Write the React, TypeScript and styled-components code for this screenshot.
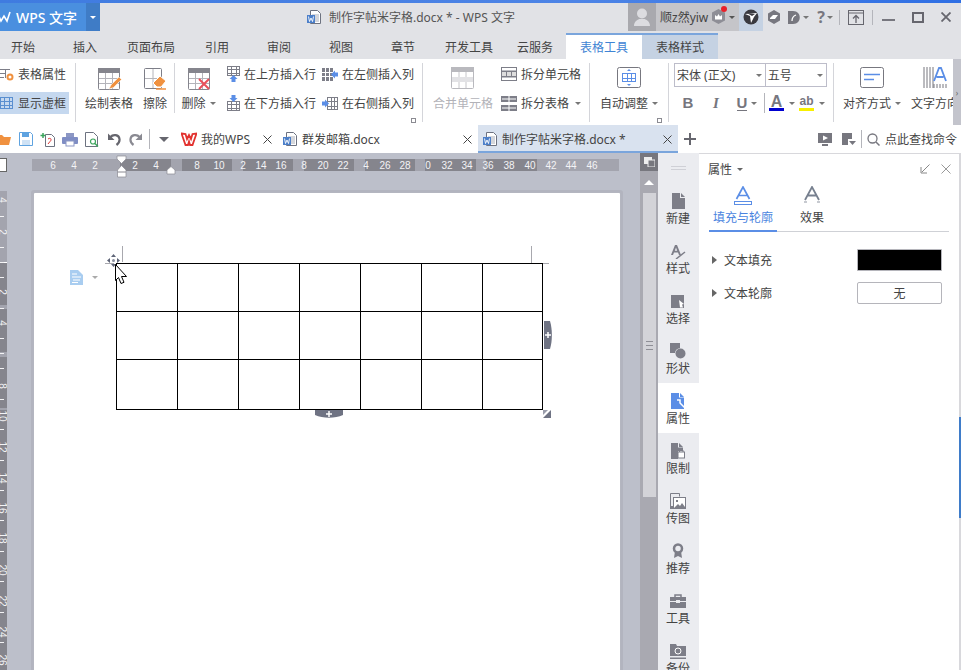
import styled, { createGlobalStyle } from "styled-components";
import type { ReactNode } from "react";

const FONT = `"Noto Sans", "Noto Sans CJK SC", sans-serif`;
const BLUE = "#5b8ee6";
const GREY = "#7d7e88";
const ORANGE = "#f0913f";

const Global = createGlobalStyle`
  html, body { margin: 0; padding: 0; background: #fff; }
  body { font-family: ${FONT}; font-size: 12px; color: #444; }
  * { box-sizing: border-box; }
`;

const Shell = styled.div`
  width: 961px;
  height: 670px;
  overflow: hidden;
  display: flex;
  flex-direction: column;
  background: #e1e2e6;
`;

const TopStrip = styled.div`
  height: 3px;
  flex: none;
  background: linear-gradient(90deg, #3f7be0, #4d84e6 60%, #2f6fe4);
`;

/* title bar */
const TitleBar = styled.div`
  height: 28px;
  flex: none;
  display: flex;
  align-items: stretch;
`;

const WpsButton = styled.div`
  width: 100px;
  display: flex;
  background: #4a8fdf;
  color: #fff;
`;

const WpsName = styled.div`
  flex: 1;
  display: flex;
  align-items: center;
  gap: 5px;
  font-size: 14px;
  font-weight: 500;
  overflow: hidden;
  white-space: nowrap;
`;

const WpsArrow = styled.div`
  width: 14px;
  flex: none;
  display: flex;
  align-items: center;
  justify-content: center;
  background: #3f7cc6;
`;

const Caret = styled.span<{ $color?: string; $size?: number; $up?: boolean; $ml?: number }>`
  display: inline-block;
  flex: none;
  width: 0;
  height: 0;
  margin-left: ${(p) => p.$ml ?? 0}px;
  border-left: ${(p) => p.$size ?? 3}px solid transparent;
  border-right: ${(p) => p.$size ?? 3}px solid transparent;
  border-top: ${(p) => p.$size ?? 3}px solid ${(p) => p.$color ?? "#666"};
  transform: ${(p) => (p.$up ? "rotate(180deg)" : "none")};
`;

const DocTitle = styled.div`
  display: flex;
  align-items: center;
  gap: 7px;
  padding-left: 207px;
  font-size: 12px;
  color: #555;
  white-space: nowrap;
`;

const TitleRight = styled.div`
  margin-left: auto;
  display: flex;
  align-items: stretch;
`;

const Avatar = styled.div`
  width: 28px;
  background: #a9a9ae;
  display: flex;
  align-items: center;
  justify-content: center;
`;

const UserName = styled.div`
  width: 83px;
  background: #c5c5c9;
  display: flex;
  align-items: center;
  padding-left: 4px;
  color: #444;
  font-size: 12px;
  gap: 3px;
  position: relative;
`;

const RedDot = styled.span`
  position: absolute;
  left: 65px;
  top: 3px;
  width: 6px;
  height: 6px;
  border-radius: 50%;
  background: #e8202a;
`;

const Slot = styled.div<{ $w: number; $bg?: string }>`
  width: ${(p) => p.$w}px;
  flex: none;
  display: flex;
  align-items: center;
  justify-content: center;
  gap: 2px;
  background: ${(p) => p.$bg ?? "transparent"};
`;

const HelpMark = styled.span`
  font-size: 16px;
  font-weight: 700;
  color: #77777f;
`;

const VSep = styled.div<{ $h: number }>`
  width: 1px;
  flex: none;
  height: ${(p) => p.$h}px;
  align-self: center;
  background: #b4b5bb;
`;

/* tabs */
const TabRow = styled.div`
  height: 28px;
  flex: none;
  display: flex;
  margin-left: -8px;
`;

const MenuTab = styled.div<{ $w: number; $kind?: "active" | "side" }>`
  width: ${(p) => p.$w}px;
  display: flex;
  align-items: center;
  justify-content: center;
  font-size: 12px;
  margin-top: 2px;
  color: ${(p) => (p.$kind === "active" ? "#3f84d4" : "#444")};
  background: ${(p) =>
    p.$kind === "active" ? "#fff" : p.$kind === "side" ? "#c5d2e3" : "transparent"};
  border-top: 2px solid ${(p) => (p.$kind ? "#7aa5dc" : "transparent")};
`;

/* ribbon */
const Ribbon = styled.div`
  height: 66px;
  flex: none;
  display: flex;
  background: #fff;
`;

const RibbonInner = styled.div`
  flex: 1;
  display: flex;
  align-items: flex-start;
  overflow: hidden;
`;

const RibbonScroller = styled.div`
  width: 8px;
  flex: none;
  background: #c3c4cc;
  display: flex;
  align-items: center;
  justify-content: center;
  color: #666;
  font-size: 8px;
`;

const Group = styled.div<{ $w: number; $pad?: number }>`
  width: ${(p) => p.$w}px;
  height: 66px;
  flex: none;
  display: flex;
  padding-left: ${(p) => p.$pad ?? 0}px;
  position: relative;
`;

const RibbonSep = styled.div<{ $h: number }>`
  width: 1px;
  flex: none;
  height: ${(p) => p.$h}px;
  margin-top: 4px;
  background: #d4d5da;
`;

const LargeButton = styled.div<{ $w: number; $off?: boolean; $ml?: number }>`
  width: ${(p) => p.$w}px;
  flex: none;
  margin-left: ${(p) => p.$ml ?? 0}px;
  padding-top: 8px;
  display: flex;
  flex-direction: column;
  align-items: center;
  color: ${(p) => (p.$off ? "#b2b2b8" : "#444")};
`;

const LargeIcon = styled.div`
  height: 25px;
  display: flex;
  align-items: flex-start;
  justify-content: center;
`;

const LargeLabel = styled.div`
  height: 22px;
  display: flex;
  align-items: center;
  gap: 4px;
  white-space: nowrap;
`;

const SmallColumn = styled.div<{ $w?: number; $ml?: number }>`
  ${(p) => (p.$w ? `width: ${p.$w}px;` : "")}
  flex: none;
  margin-left: ${(p) => p.$ml ?? 0}px;
  display: flex;
  flex-direction: column;
  gap: 7px;
  padding-top: 4px;
`;

const SmallButton = styled.div<{ $on?: boolean; $gap?: number; $w?: number }>`
  height: 22px;
  ${(p) => (p.$w ? `width: ${p.$w}px;` : "")}
  display: flex;
  align-items: center;
  gap: ${(p) => p.$gap ?? 4}px;
  white-space: nowrap;
  background: ${(p) => (p.$on ? "#c5d8ef" : "transparent")};
`;

const Launcher = styled.div<{ $right: number }>`
  position: absolute;
  right: ${(p) => p.$right}px;
  bottom: 2px;
  width: 5px;
  height: 5px;
  border: 1px solid #8b8b92;
`;

const FontColumn = styled.div`
  display: flex;
  flex-direction: column;
  padding-top: 4px;
`;

const FontSelects = styled.div`
  display: flex;
  height: 24px;
  border: 1px solid #bdbdca;
  width: 153px;
`;

const FontSelect = styled.div<{ $w: number }>`
  width: ${(p) => p.$w}px;
  padding: 0 3px 0 2px;
  display: flex;
  align-items: center;
  justify-content: space-between;
  white-space: nowrap;
  & + & {
    border-left: 1px solid #bdbdca;
  }
`;

const FormatRow = styled.div`
  display: flex;
  align-items: center;
  height: 22px;
  margin-top: 5px;
`;

const FormatKey = styled.div<{ $w: number }>`
  width: ${(p) => p.$w}px;
  flex: none;
  display: flex;
  align-items: center;
  justify-content: center;
  gap: 4px;
`;

const ColorButton = styled.div`
  width: 30px;
  flex: none;
  padding-left: 4px;
  display: flex;
  align-items: center;
  gap: 5px;
`;

const BoldKey = styled.span<{ $italic?: boolean; $line?: boolean }>`
  font-family: ${(p) => (p.$italic ? `"Liberation Serif", serif` : `"Liberation Sans", sans-serif`)};
  font-size: 15px;
  font-weight: 700;
  color: #76767e;
  font-style: ${(p) => (p.$italic ? "italic" : "normal")};
  border-bottom: ${(p) => (p.$line ? "1.5px solid #76767e" : "none")};
  line-height: 14px;
`;

const ColorKey = styled.span<{ $bar: string; $small?: boolean }>`
  font-family: "Liberation Sans", sans-serif;
  font-weight: 700;
  font-size: ${(p) => (p.$small ? 12 : 16)}px;
  line-height: 13px;
  width: 15px;
  text-align: center;
  color: #77777f;
  border-bottom: 3px solid ${(p) => p.$bar};
`;

/* doc tabs */
const DocTabBar = styled.div`
  height: 28px;
  flex: none;
  display: flex;
  align-items: stretch;
  background: #fff;
`;

const QuickBar = styled.div`
  display: flex;
  flex: none;
  margin-left: -7px;
  margin-right: 2px;
`;

const DocTab = styled.div<{ $w: number; $active?: boolean; $pad?: number }>`
  width: ${(p) => p.$w}px;
  flex: none;
  display: flex;
  align-items: center;
  gap: 4px;
  padding: 2px 6px 0 ${(p) => p.$pad ?? 5}px;
  background: ${(p) => (p.$active ? "#d9e2ef" : "transparent")};
  border-bottom: 2px solid ${(p) => (p.$active ? "#7aa5dc" : "transparent")};
  white-space: nowrap;
`;

const CloseBox = styled.span`
  margin-left: auto;
  line-height: 0;
`;

const AddTab = styled.div`
  width: 24px;
  display: flex;
  align-items: center;
  justify-content: center;
`;

const SearchTools = styled.div`
  margin-left: auto;
  display: flex;
  align-items: center;
  padding-right: 4px;
  gap: 5px;
`;

const ScreenTool = styled.span`
  margin-right: 5px;
  line-height: 0;
`;

/* main */
const Main = styled.div`
  flex: 1;
  min-height: 0;
  display: flex;
`;

const DocArea = styled.div`
  width: 640px;
  flex: none;
  background: #bcbfca;
  display: flex;
  flex-direction: column;
  overflow: hidden;
`;

const RulerRow = styled.div`
  height: 38px;
  flex: none;
  display: flex;
  align-items: flex-start;
  padding-top: 2px;
`;

const Corner = styled.div`
  width: 8px;
  height: 14px;
  margin-top: 3px;
  margin-right: 25px;
  margin-left: -1px;
  background: #fff;
  border: 1px solid #666;
  flex: none;
`;

const DocBody = styled.div`
  flex: 1;
  min-height: 0;
  display: flex;
  align-items: flex-start;
`;

const RulerSvg = styled.svg`
  flex: none;
  display: block;
`;

const PageSheet = styled.div`
  margin: 2px 0 0 27px;
  width: 586px;
  height: 600px;
  flex: none;
  background: #fff;
  box-shadow: 0 0 0 1px #b4b6c0, 0 0 0 3px #b2b4bf;
  border-radius: 1px;
  padding: 70px 0 0 82px;
`;

const TableWrap = styled.div`
  position: relative;
  width: 427px;
`;

const Cells = styled.table`
  border-collapse: collapse;
  table-layout: fixed;
  width: 427px;
  td {
    border: 1px solid #000;
    height: 48px;
    padding: 0;
  }
  tr:last-child td {
    height: 50px;
  }
`;

const Overlay = styled.div<{ $l: number; $t: number }>`
  position: absolute;
  left: ${(p) => p.$l}px;
  top: ${(p) => p.$t}px;
  display: flex;
  align-items: center;
  gap: 9px;
  line-height: 0;
`;

const GuideLine = styled.div<{ $l: number; $t: number; $w: number; $h: number }>`
  position: absolute;
  left: ${(p) => p.$l}px;
  top: ${(p) => p.$t}px;
  width: ${(p) => p.$w}px;
  height: ${(p) => p.$h}px;
  background: #a8a8ae;
`;

const ScrollColumn = styled.div`
  width: 18px;
  flex: none;
  background: #a9a9b1;
  display: flex;
  flex-direction: column;
  align-items: center;
`;

const ScrollTop = styled.div`
  width: 18px;
  height: 18px;
  flex: none;
  background: #77777e;
  display: flex;
  align-items: center;
  justify-content: center;
`;

const ScrollUp = styled.div`
  height: 22px;
  flex: none;
  display: flex;
  align-items: center;
  justify-content: center;
`;

const ScrollThumb = styled.div`
  width: 13px;
  height: 304px;
  background: #d3d3d8;
  display: flex;
  flex-direction: column;
  align-items: center;
  justify-content: center;
  gap: 3px;
  span {
    width: 7px;
    height: 1px;
    background: #8f8f96;
  }
`;

const Sidebar = styled.div`
  width: 41px;
  flex: none;
  background: #ebecf0;
  display: flex;
  flex-direction: column;
`;

const SideGrip = styled.div`
  height: 30px;
  flex: none;
  display: flex;
  flex-direction: column;
  align-items: center;
  justify-content: center;
  gap: 2px;
  span {
    width: 15px;
    height: 1px;
    background: #cfd0d6;
  }
`;

const SideItem = styled.div<{ $active?: boolean }>`
  height: 50px;
  flex: none;
  display: flex;
  flex-direction: column;
  align-items: center;
  padding: 9px 1px 0 0;
  background: ${(p) => (p.$active ? "#fff" : "transparent")};
  color: #444;
`;

const SideIcon = styled.div`
  height: 18px;
  display: flex;
  align-items: center;
  justify-content: center;
`;

const SideLabel = styled.div`
  height: 17px;
  line-height: 17px;
  white-space: nowrap;
`;

const Panel = styled.div`
  flex: 1;
  background: #fff;
  border-top: 1px solid #d8d8dc;
  padding: 0 10px;
`;

const PanelHeader = styled.div`
  height: 29px;
  margin-left: -1px;
  display: flex;
  align-items: center;
  gap: 5px;
  padding-top: 1px;
`;

const PanelTools = styled.div`
  margin-left: auto;
  display: flex;
  gap: 11px;
  align-items: center;
  margin-right: -2px;
`;

const PanelTabs = styled.div`
  display: flex;
  border-bottom: 1px solid #cfd1d6;
  height: 49px;
`;

const PanelTab = styled.div<{ $active?: boolean }>`
  width: ${(p) => (p.$active ? 68 : 70)}px;
  padding-top: 3px;
  height: 49px;
  display: flex;
  flex-direction: column;
  align-items: center;
  color: ${(p) => (p.$active ? "#4a84e0" : "#444")};
  border-bottom: 2px solid ${(p) => (p.$active ? BLUE : "transparent")};
`;

const PanelTabLabel = styled.div`
  height: 22px;
  line-height: 22px;
  margin-top: 1px;
`;

const PropList = styled.div`
  margin-top: 17px;
  display: flex;
  flex-direction: column;
  gap: 11px;
  padding: 0 7px 0 3px;
`;

const PropRow = styled.div`
  height: 22px;
  display: flex;
  align-items: center;
  gap: 7px;
`;

const RightCaret = styled.span`
  width: 0;
  height: 0;
  border-top: 4px solid transparent;
  border-bottom: 4px solid transparent;
  border-left: 5px solid #666;
`;

const Swatch = styled.div`
  margin-left: auto;
  width: 85px;
  height: 22px;
  background: #000;
  border: 1px solid #b5b5bb;
  border-radius: 1px;
`;

const NoneButton = styled.div`
  margin-left: auto;
  width: 85px;
  height: 22px;
  border: 1px solid #b5b5bb;
  border-radius: 2px;
  display: flex;
  align-items: center;
  justify-content: center;
`;

const EdgeStrip = styled.div`
  width: 2px;
  flex: none;
  background: #d8d8dc;
  padding-top: 264px;
  &::after {
    content: "";
    display: block;
    height: 101px;
    background: #3f7cc9;
  }
`;

/* small drawings */
type SvgProps = { w?: number; h?: number; children: ReactNode };
const Svg = ({ w = 16, h = 16, children }: SvgProps) => (
  <RulerSvg width={w} height={h} viewBox={`0 0 ${w} ${h}`}>
    {children}
  </RulerSvg>
);

const Grid = ({ x, y, w, h, cols, rows, c = GREY }: { x: number; y: number; w: number; h: number; cols: number; rows: number; c?: string }) => (
  <g stroke={c} fill="none">
    <rect x={x + 0.5} y={y + 0.5} width={w - 1} height={h - 1} />
    {Array.from({ length: cols - 1 }, (_, i) => {
      const px = Math.round(x + ((i + 1) * w) / cols) + 0.5;
      return <line key={i} x1={px} x2={px} y1={y} y2={y + h} />;
    })}
    {Array.from({ length: rows - 1 }, (_, i) => {
      const py = Math.round(y + ((i + 1) * h) / rows) + 0.5;
      return <line key={i} x1={x} x2={x + w} y1={py} y2={py} />;
    })}
  </g>
);

const BigTable = ({ children, c = "#85858d", light = "#b4b4ba" }: { children?: ReactNode; c?: string; light?: string }) => (
  <Svg w={26} h={24}>
    <rect x="2.5" y="1.5" width="21" height="21" rx="1" fill="#fff" stroke={c} />
    <rect x="2" y="1" width="22" height="5" fill={c} />
    <path d="M9.5 6v16M16.5 6v16M3 11.5h20M3 16.5h20" stroke={light} fill="none" />
    {children}
  </Svg>
);

const WDoc = () => (
  <Svg w={15} h={16}>
    <path d="M3.5 1.5h7l3 3v10h-10z" fill="#fff" stroke="#6d7280" />
    <path d="M5 6h7M5 8h7M5 10h7M5 12h7" stroke="#a9adb7" />
    <rect x="0" y="6" width="8" height="8" fill="#4c7fc9" />
    <path d="M1.5 7.5l1 5 1.5-3.5 1.5 3.5 1-5" stroke="#fff" fill="none" strokeWidth="0.9" />
  </Svg>
);

const Close = () => (
  <CloseBox>
    <Svg w={9} h={9}>
      <path d="M.5.500l8 8M8.500.500l-8 8" stroke="#444" fill="none" />
    </Svg>
  </CloseBox>
);

const darkRuns: [number, number][] = [
  [120, 171],
  [182, 232],
  [243, 293],
  [304, 354],
  [365, 415],
  [425, 476],
  [486, 537],
];
const rulerTicks: [string, number][] = [
  ["6", 53], ["4", 74], ["2", 95], ["2", 135], ["4", 156], ["8", 197], ["10", 219], ["2", 243],
  ["14", 261], ["16", 281], ["8", 304], ["20", 323], ["22", 343], ["4", 366], ["26", 385], ["28", 405],
  ["0", 428], ["32", 447], ["34", 467], ["36", 488], ["38", 509], ["40", 530], ["42", 551], ["44", 571], ["46", 592],
];

const HRuler = () => (
  <RulerSvg width={590} height={24} viewBox="32 155 590 24">
    <rect x="32" y="159" width="587" height="12" fill="#a3a4ae" />
    {darkRuns.map(([a, b]) => (
      <rect key={a} x={a} y="159" width={b - a} height="12" fill="#85858d" />
    ))}
    {rulerTicks.map(([t, x], i) => (
      <text key={i} x={x} y="169" textAnchor="middle" fontSize="10" fill="#f3f3f5" fontFamily="Liberation Sans, sans-serif">
        {t}
      </text>
    ))}
    <path d="M117 156h9v3l-4.500 4.500-4.500-4.500zM117.500 177v-7l4-4.500 4.500 4.500v7z" fill="#fff" stroke="#8a8a92" strokeWidth="0.7" />
    <path d="M117.500 172h8.500" stroke="#8a8a92" />
    <path d="M167 174v-4l4-3.500 4 3.500v4z" fill="#fff" stroke="#8a8a92" strokeWidth="0.7" />
  </RulerSvg>
);

const vDark: [number, number][] = [
  [263, 305],
  [309, 352],
  [357, 408],
  [410, 670],
];
const vLabels: [string, number][] = [
  ["4", 200], ["2", 232], ["2", 292], ["4", 323], ["8", 386], ["10", 416], ["12", 447], ["14", 478],
  ["16", 508], ["18", 538], ["20", 570], ["22", 601], ["24", 632], ["26", 660],
];

const VRuler = () => (
  <RulerSvg width={7} height={479} viewBox="0 191 7 479">
    <rect x="0" y="191" width="7" height="479" fill="#a3a4ae" />
    {vDark.map(([a, b]) => (
      <rect key={a} x="0" y={a} width="7" height={b - a} fill="#85858d" />
    ))}
    <rect x="0" y="262" width="7" height="1" fill="#fff" />
    {vLabels.map(([t, y], i) => (
      <text
        key={i}
        x={-1}
        y={y}
        transform={`rotate(90 -1 ${y})`}
        textAnchor="middle"
        fontSize="10"
        fill="#f3f3f5"
        fontFamily="Liberation Sans, sans-serif"
      >
        {t}
      </text>
    ))}
    {Array.from({ length: 31 }, (_, i) => 186 + i * 15.2)
      .filter((y) => vLabels.every(([, l]) => Math.abs(l - y) > 6))
      .map((y) => (
        <rect key={y} x="0" y={Math.round(y)} width="4" height="1" fill="#f3f3f5" />
      ))}
  </RulerSvg>
);

const tools = [
  <Svg key="0" h={14}><path d="M0 3h6l2 2h7l-2 8H0z" fill={ORANGE} /></Svg>,
  <Svg key="1" w={14} h={14}><path d="M.5.500h11l2 2v11H.5z" fill="#fff" stroke="#5fa3e0" /><rect x="3" y="1" width="7" height="4" fill="#5fa3e0" /><rect x="3" y="8" width="8" height="5" fill="#cfe2f5" /></Svg>,
  <Svg key="2" w={16} h={15}><path d="M5.500 2.500h6l3 3v9h-9z" fill="#fff" stroke="#6d7280" /><path d="M8 7c3-2 4 1 2 2.500L8 12" stroke="#d33" fill="none" /><path d="M3 1v5M.5 3.500h5" stroke="#3ba55c" strokeWidth="1.500" /></Svg>,
  <Svg key="3" w={16} h={15}><rect x="4" y="1" width="8" height="4" fill="#8c97c4" /><rect x="0" y="5" width="16" height="7" rx="1" fill="#7f8dc4" /><rect x="4" y="9" width="8" height="5" fill="#fff" stroke="#8c97c4" /></Svg>,
  <Svg key="4" w={14} h={15}><path d="M.5.500h8l4 4v10H.5z" fill="#fff" stroke="#6d7280" /><circle cx="8" cy="9.500" r="2.500" fill="none" stroke="#3ba55c" strokeWidth="1.200" /><path d="M10 11.500l3 3" stroke="#3ba55c" strokeWidth="1.500" /></Svg>,
  <Svg key="5" w={14} h={14}><path d="M3.500 5C6 2 12 2.500 12.500 7c.3 2.500-1 4.500-3 6" stroke="#66666e" strokeWidth="2.200" fill="none" /><path d="M1 1.500V8h6.500z" fill="#66666e" /></Svg>,
  <Svg key="6" w={14} h={14}><path d="M10.500 5C8 2 2 2.500 1.500 7c-.3 2.500 1 4.500 3 6" stroke="#8a8a92" strokeWidth="2.200" fill="none" /><path d="M13 1.500V8H6.500z" fill="#8a8a92" /></Svg>,
];

const sideItems: { label: string; icon: ReactNode; active?: boolean }[] = [
  { label: "新建", icon: <Svg w={13} h={16}><path d="M0 0h8v5h5v11H0zM9 0l4 4H9z" fill={GREY} /></Svg> },
  { label: "样式", icon: <Svg w={16} h={15}><path d="M1 11L5 1h2l4 10H9L8 8.500H4L3 11zM4.800 6.800h2.400L6 3.500z" fill={GREY} /><path d="M6 15l9-7" stroke={GREY} strokeWidth="1.500" /></Svg> },
  { label: "选择", icon: <Svg w={14} h={13}><rect x="0" y="0" width="13" height="13" fill={GREY} /><path d="M8 5l5 4-2 .5 1 3H9z" fill="#fff" /></Svg> },
  { label: "形状", icon: <Svg w={16} h={16}><rect x="0" y="0" width="10" height="10" fill={GREY} /><circle cx="10.500" cy="10.500" r="5.500" fill="#ebecf0" /><circle cx="10.500" cy="10.500" r="5" fill={GREY} /></Svg> },
  { label: "属性", active: true, icon: <Svg w={15} h={16}><path d="M0 0h8v4.500h5V16H0zM9 0l4 4H9z" fill={BLUE} /><path d="M6 7h3v3l5 5" stroke="#fff" strokeWidth="1.500" fill="none" /></Svg> },
  { label: "限制", icon: <Svg w={14} h={16}><path d="M0 0h7v4.500h5V8H7v8H0zM8 0l4 4H8z" fill={GREY} /><rect x="7" y="9" width="6.500" height="6" fill="#fff" stroke={GREY} /><path d="M8.500 9V7.500a2 2 0 0 1 3.500 0V9" stroke={GREY} fill="none" /></Svg> },
  { label: "传图", icon: <Svg w={16} h={16}><path d="M.5 15.500V.5h9v3" fill="none" stroke={GREY} /><rect x="0" y="13" width="3" height="3" fill={GREY} /><rect x="3.500" y="4.500" width="12" height="11" fill="#fff" stroke={GREY} /><path d="M4 15l4-4 2 2 2-3 3 4v1z" fill={GREY} /><rect x="6" y="7" width="2" height="2" fill={GREY} /></Svg> },
  { label: "推荐", icon: <Svg w={12} h={16}><path d="M3 8l-1 7 4-2 4 2-1-7z" fill={GREY} /><circle cx="6" cy="5.500" r="4" fill="#ebecf0" stroke={GREY} strokeWidth="2.500" /></Svg> },
  { label: "工具", icon: <Svg w={16} h={14}><path d="M5 3V1h6v2" fill="none" stroke={GREY} strokeWidth="1.500" /><rect x="0" y="3" width="16" height="11" fill={GREY} /><path d="M0 7.500h16" stroke="#ebecf0" /><rect x="6" y="6" width="4" height="3" fill="#ebecf0" /></Svg> },
  { label: "备份", icon: <Svg w={16} h={15}><path d="M0 0h6l1 2h9v10H0z" fill={GREY} /><circle cx="8" cy="7" r="3" fill="none" stroke="#fff" /><rect x="0" y="13.500" width="16" height="1.500" fill={GREY} /></Svg> },
];

const columnWidths = [61, 61, 61, 61, 61, 61, 60];

export default function App() {
  const rows = Array.from({ length: 3 });

  return (
    <Shell>
      <Global />
      <TopStrip />
      <TitleBar>
        <WpsButton>
          <WpsName>
            <Svg w={11} h={14}>
              <path d="M-2 4l3 7 3-5 3 5 3-9" stroke="#fff" strokeWidth="1.600" fill="none" />
            </Svg>
            WPS 文字
          </WpsName>
          <WpsArrow>
            <Caret $color="#fff" />
          </WpsArrow>
        </WpsButton>
        <DocTitle>
          <WDoc />
          <span>制作字帖米字格.docx * - WPS 文字</span>
        </DocTitle>
        <TitleRight>
          <Avatar>
            <Svg w={18} h={20}>
              <circle cx="9" cy="6.500" r="5" fill="#dcdce0" />
              <path d="M1 19c0-5 4-6 5-7h6c1 1 5 2 5 7z" fill="#dcdce0" />
            </Svg>
          </Avatar>
          <UserName>
            顺z然yiw
            <Svg w={15} h={16}>
              <path d="M7.500 0l6.500 3.500v8L7.500 15 1 11.500v-8z" fill="#8e8e96" />
              <path d="M4 6l2 1.500L7.500 5 9 7.500 11 6v4.500H4z" fill="#fff" />
            </Svg>
            <Caret $color="#555" />
            <RedDot />
          </UserName>
          <Slot $w={24} $bg="#c5d2e3">
            <Svg w={16} h={16}>
              <circle cx="8" cy="8" r="7.500" fill="#3a3a40" />
              <path d="M2 5l5 2 1 7 3-6 3-4z" fill="#fff" />
              <path d="M4 4l5 3 3-2" fill="#3a3a40" />
            </Svg>
          </Slot>
          <Slot $w={22}>
            <Svg w={14} h={14}>
              <path d="M7 0l6 3.500v7L7 14l-6-3.500v-7z" fill="#77777f" />
              <path d="M3 8l3-3h5L8 9H3z" fill="#fff" />
            </Svg>
          </Slot>
          <Slot $w={26}>
            <Svg w={14} h={15}>
              <path d="M1 1h5c9 0 9 13 0 13H1z" fill="#77777f" />
              <path d="M5 11c0-3 1-5 4-6" stroke="#fff" strokeWidth="1.300" fill="none" />
            </Svg>
            <Caret $color="#777" />
          </Slot>
          <Slot $w={28}>
            <HelpMark>?</HelpMark>
            <Caret $color="#777" />
          </Slot>
          <VSep $h={15} />
          <Slot $w={32}>
            <Svg w={16} h={15}>
              <rect x=".5" y=".5" width="15" height="14" fill="none" stroke="#66666e" />
              <path d="M0 3h16" stroke="#66666e" />
              <path d="M8 13V6M5 8.500L8 5.500l3 3" stroke="#66666e" strokeWidth="1.300" fill="none" />
            </Svg>
          </Slot>
          <VSep $h={15} />
          <Slot $w={31}>
            <Svg w={13} h={10}>
              <rect x="0" y="7" width="13" height="2" fill="#77777f" />
            </Svg>
          </Slot>
          <Slot $w={27}>
            <Svg w={12} h={11}>
              <rect x="1" y="1" width="10" height="9" fill="none" stroke="#66666e" strokeWidth="2" />
            </Svg>
          </Slot>
          <Slot $w={30}>
            <Svg w={10} h={10}>
              <path d="M.5.500l9 9M9.500.500l-9 9" stroke="#66666e" strokeWidth="1.800" />
            </Svg>
          </Slot>
        </TitleRight>
      </TitleBar>

      <TabRow>
        <MenuTab $w={62}>开始</MenuTab>
        <MenuTab $w={62}>插入</MenuTab>
        <MenuTab $w={70}>页面布局</MenuTab>
        <MenuTab $w={62}>引用</MenuTab>
        <MenuTab $w={62}>审阅</MenuTab>
        <MenuTab $w={62}>视图</MenuTab>
        <MenuTab $w={62}>章节</MenuTab>
        <MenuTab $w={70}>开发工具</MenuTab>
        <MenuTab $w={62}>云服务</MenuTab>
        <MenuTab $w={76} $kind="active">表格工具</MenuTab>
        <MenuTab $w={76} $kind="side">表格样式</MenuTab>
      </TabRow>

      <Ribbon>
        <RibbonInner>
          <Group $w={75}>
            <SmallColumn>
              <SmallButton>
                <Svg w={14} h={13}>
                  <path d="M-2 1.500h12M-2 5.500h8M-2 9.500h6M5.500 1v9" stroke={GREY} fill="none" />
                  <circle cx="10" cy="9" r="2.500" fill="none" stroke={ORANGE} strokeWidth="2" />
                </Svg>
                表格属性
              </SmallButton>
              <SmallButton $on $w={69}>
                <Svg w={14} h={14}>
                  <Grid x={0} y={1} w={13} h={12} cols={3} rows={3} c="#5a8fd0" />
                </Svg>
                显示虚框
              </SmallButton>
            </SmallColumn>
          </Group>
          <RibbonSep $h={59} />
          <Group $w={98} $pad={8}>
            <LargeButton $w={50}>
              <LargeIcon>
                <BigTable>
                  <path d="M13 22l2-4 8-8 2.500 2.500-8 8z" fill={ORANGE} stroke="#fff" strokeWidth=".5" />
                </BigTable>
              </LargeIcon>
              <LargeLabel>绘制表格</LargeLabel>
            </LargeButton>
            <LargeButton $w={24} $ml={9}>
              <LargeIcon>
                <Svg w={25} h={24}>
                  <rect x="1.500" y="1.500" width="17" height="20" rx="1" fill="#fff" stroke={GREY} />
                  <path d="M10 2v19M2 11.500h16" stroke="#b4b4ba" />
                  <path d="M10 16l7-7 6 5-5 6h-4z" fill={ORANGE} stroke="#fff" />
                  <path d="M13 22h10" stroke={ORANGE} strokeWidth="1.500" />
                </Svg>
              </LargeIcon>
              <LargeLabel>擦除</LargeLabel>
            </LargeButton>
          </Group>
          <RibbonSep $h={50} />
          <Group $w={247} $pad={7}>
            <LargeButton $w={33}>
              <LargeIcon>
                <BigTable>
                  <path d="M13 12l10 10M23 12L13 22" stroke="#e8505b" strokeWidth="2" />
                </BigTable>
              </LargeIcon>
              <LargeLabel>
                删除
                <Caret $color="#777" />
              </LargeLabel>
            </LargeButton>
            <SmallColumn $w={96} $ml={11}>
              <SmallButton $gap={3}>
                <Svg w={15} h={16}>
                  <Grid x={1} y={0} w={13} h={10} cols={3} rows={3} />
                  <path d="M7.500 9l4 4H9.500v3h-4v-3H3.500z" fill={BLUE} />
                </Svg>
                在上方插入行
              </SmallButton>
              <SmallButton $gap={3}>
                <Svg w={15} h={16}>
                  <Grid x={1} y={6} w={13} h={10} cols={3} rows={3} />
                  <path d="M7.500 7l4-4H9.500V0h-4v3H3.500z" fill={BLUE} />
                </Svg>
                在下方插入行
              </SmallButton>
            </SmallColumn>
            <SmallColumn>
              <SmallButton>
                <Svg w={16} h={13}>
                  <rect x="0" y="0" width="11" height="13" fill={GREY} />
                  <path d="M3.500 0v13M7.500 0v13M0 4.500h11M0 8.500h11" stroke="#fff" />
                  <path d="M9 6.500l4-4v2h3v4h-3v2z" fill={BLUE} />
                </Svg>
                在左侧插入列
              </SmallButton>
              <SmallButton>
                <Svg w={16} h={13}>
                  <Grid x={5} y={0} w={11} h={13} cols={3} rows={3} />
                  <path d="M7 6.500l-4-4v2H0v4h3v2z" fill={BLUE} />
                </Svg>
                在右侧插入列
              </SmallButton>
            </SmallColumn>
            <Launcher $right={6} />
          </Group>
          <RibbonSep $h={59} />
          <Group $w={166} $pad={10}>
            <LargeButton $w={60} $off>
              <LargeIcon>
                <Svg w={24} h={22}>
                  <rect x=".5" y=".5" width="22" height="21" rx="1" fill="#fff" stroke="#b9b9be" />
                  <rect x="0" y="0" width="23" height="5" fill="#b9b9be" />
                  <rect x="1" y="10" width="21" height="5" fill="#e2e2e5" />
                  <path d="M8 5v5M15 5v5M8 15v6M15 15v6" stroke="#c6c6ca" />
                </Svg>
              </LargeIcon>
              <LargeLabel>合并单元格</LargeLabel>
            </LargeButton>
            <SmallColumn $ml={8}>
              <SmallButton>
                <Svg w={16} h={14}>
                  <rect x="0" y="0" width="16" height="14" fill={GREY} />
                  <rect x="1" y="5" width="14" height="4" fill="#ddd" />
                  <path d="M5.500 5v4M10.500 5v4" stroke={GREY} />
                  <rect x="1" y="1" width="14" height="2.500" fill="#fff" />
                  <rect x="1" y="10.500" width="14" height="2.500" fill="#fff" />
                </Svg>
                拆分单元格
              </SmallButton>
              <SmallButton>
                <Svg w={16} h={15}>
                  <rect x="0" y="0" width="16" height="6" fill={GREY} />
                  <rect x="0" y="9" width="16" height="6" fill={GREY} />
                  <path d="M8 0v6M8 9v6M1 3h14M1 12h14" stroke="#fff" />
                </Svg>
                拆分表格
                <Caret $color="#777" $ml={2} />
              </SmallButton>
            </SmallColumn>
          </Group>
          <RibbonSep $h={59} />
          <Group $w={78}>
            <LargeButton $w={78}>
              <LargeIcon>
                <Svg w={24} h={21}>
                  <rect x=".5" y=".5" width="23" height="20" rx="2" fill="#fff" stroke="#77777f" />
                  <Grid x={5} y={6} w={14} h={9} cols={3} rows={2} c={BLUE} />
                  <path d="M12 2l2 2h-4zM12 19l2-2h-4z" fill={BLUE} />
                </Svg>
              </LargeIcon>
              <LargeLabel>
                自动调整
                <Caret $color="#777" />
              </LargeLabel>
            </LargeButton>
            <Launcher $right={6} />
          </Group>
          <RibbonSep $h={59} />
          <Group $w={164} $pad={5}>
            <FontColumn>
              <FontSelects>
                <FontSelect $w={91}>
                  宋体 (正文)
                  <Caret $color="#777" />
                </FontSelect>
                <FontSelect $w={62}>
                  五号
                  <Caret $color="#777" />
                </FontSelect>
              </FontSelects>
              <FormatRow>
                <FormatKey $w={28}><BoldKey>B</BoldKey></FormatKey>
                <FormatKey $w={28}><BoldKey $italic>I</BoldKey></FormatKey>
                <FormatKey $w={34}>
                  <BoldKey $line>U</BoldKey>
                  <Caret $color="#777" />
                </FormatKey>
                <VSep $h={20} />
                <ColorButton>
                  <ColorKey $bar="#0000d0">A</ColorKey>
                  <Caret $color="#777" />
                </ColorButton>
                <ColorButton>
                  <ColorKey $bar="#f8f000" $small>ab</ColorKey>
                  <Caret $color="#777" />
                </ColorButton>
              </FormatRow>
            </FontColumn>
          </Group>
          <RibbonSep $h={59} />
          <Group $w={119} $pad={9}>
            <LargeButton $w={58}>
              <LargeIcon>
                <Svg w={24} h={21}>
                  <rect x=".5" y=".5" width="23" height="20" rx="2" fill="#fff" stroke="#77777f" />
                  <path d="M4 7.500h16M4 12.500h10" stroke={BLUE} strokeWidth="1.600" />
                </Svg>
              </LargeIcon>
              <LargeLabel>
                对齐方式
                <Caret $color="#777" />
              </LargeLabel>
            </LargeButton>
            <LargeButton $w={48} $ml={10}>
              <LargeIcon>
                <Svg w={24} h={23}>
                  <path d="M1 0v21M4 0v21M7 0v21M10 0v21" stroke="#77777f" />
                  <path d="M11 14l5-13h2l5 13M13.500 10h7" stroke={BLUE} strokeWidth="1.800" fill="none" />
                  <path d="M11 17v4M14 17v4M17 17v4M20 17v4M23 17v4" stroke="#77777f" />
                </Svg>
              </LargeIcon>
              <LargeLabel>文字方向</LargeLabel>
            </LargeButton>
          </Group>
        </RibbonInner>
        <RibbonScroller>›</RibbonScroller>
      </Ribbon>

      <DocTabBar>
        <QuickBar>
          {tools.map((t, i) => (
            <Slot key={i} $w={22}>
              {t}
            </Slot>
          ))}
        </QuickBar>
        <VSep $h={20} />
        <Slot $w={28}>
          <Caret $color="#66666e" $size={5} />
        </Slot>
        <DocTab $w={100} $pad={3}>
          <Svg w={16} h={14}>
            <path d="M.5 1.500l4 .5 1.500 5 2-4 2 4 1.500-5 4-.5-4 11.500H9L8 9.500 7 13H4.500z" fill="#fff" stroke="#e2322f" strokeWidth="1.800" />
          </Svg>
          我的WPS
          <Close />
        </DocTab>
        <DocTab $w={200}>
          <WDoc />
          群发邮箱.docx
          <Close />
        </DocTab>
        <DocTab $w={200} $active>
          <WDoc />
          制作字帖米字格.docx *
          <Close />
        </DocTab>
        <AddTab>
          <Svg w={12} h={12}>
            <path d="M6 0v12M0 6h12" stroke="#66666e" strokeWidth="2" />
          </Svg>
        </AddTab>
        <SearchTools>
          <ScreenTool>
            <Svg w={14} h={13}>
              <rect x="0" y="0" width="14" height="10" fill="#77777f" />
              <path d="M5 2.500l5 2.500-5 2.500z" fill="#fff" />
              <rect x="4" y="11" width="6" height="2" fill="#77777f" />
            </Svg>
          </ScreenTool>
          <Svg w={14} h={13}>
            <path d="M0 0h10v6H6v6H0z" fill="#77777f" />
            <path d="M7 8h7l-3.500 4z" fill="#77777f" />
          </Svg>
          <VSep $h={18} />
          <Svg w={13} h={13}>
            <circle cx="5.500" cy="5.500" r="4.500" fill="none" stroke="#77777f" strokeWidth="1.300" />
            <path d="M9 9l3.500 3.500" stroke="#77777f" strokeWidth="1.500" />
          </Svg>
          点此查找命令
        </SearchTools>
      </DocTabBar>

      <Main>
        <DocArea>
          <RulerRow>
            <Corner />
            <HRuler />
          </RulerRow>
          <DocBody>
            <VRuler />
            <PageSheet>
              <TableWrap>
                <Cells>
                  <colgroup>
                    {columnWidths.map((w, i) => (
                      <col key={i} width={w} />
                    ))}
                  </colgroup>
                  <tbody>
                    {rows.map((_, r) => (
                      <tr key={r}>
                        {columnWidths.map((_, c) => (
                          <td key={c} />
                        ))}
                      </tr>
                    ))}
                  </tbody>
                </Cells>
                <GuideLine $l={6} $t={-17} $w={1} $h={16} />
                <GuideLine $l={415} $t={-17} $w={1} $h={17} />
                <GuideLine $l={-11} $t={0} $w={9} $h={1} />
                <GuideLine $l={427} $t={0} $w={6} $h={1} />
                <Overlay $l={-46} $t={7}>
                  <Svg w={13} h={15}>
                    <path d="M0 0h8l5 5v10H0z" fill="#a9cdf0" />
                    <path d="M2 4h5M2 7h9M3 10h7M2 12.500h6" stroke="#fff" />
                  </Svg>
                  <Caret $color="#aaa" />
                </Overlay>
                <Overlay $l={-9} $t={-9}>
                  <Svg w={13} h={13}>
                    <path d="M6.500 0l2.500 3h-5zM6.500 13L4 10h5zM0 6.500L3 4v5zM13 6.500L10 4v5z" fill="#5f6578" />
                    <circle cx="6.500" cy="6.500" r="1.500" fill="#8a8f9e" />
                  </Svg>
                </Overlay>
                <Overlay $l={-1} $t={1}>
                  <Svg w={13} h={21}>
                    <path d="M.5.500v16l3-3 2.500 6 3-1.200-2.500-5.800h5z" fill="#fff" stroke="#000" />
                  </Svg>
                </Overlay>
                <Overlay $l={428} $t={58}>
                  <Svg w={8} h={28}>
                    <path d="M0 0h6c2.500 8 2.500 20 0 28H0z" fill="#6f7383" />
                    <path d="M1 14h6M4 11v6" stroke="#fff" strokeWidth="1.500" />
                  </Svg>
                </Overlay>
                <Overlay $l={199} $t={147}>
                  <Svg w={28} h={8}>
                    <path d="M0 0h28v5c-8 3.500-20 3.500-28 0z" fill="#6f7383" />
                    <path d="M11 4h6M14 1v6" stroke="#fff" strokeWidth="1.500" />
                  </Svg>
                </Overlay>
                <Overlay $l={427} $t={147}>
                  <Svg w={8} h={8}>
                    <path d="M8 8H0l8-8z" fill="#6f7383" />
                    <path d="M0 0h5L0 5z" fill="#9a9dab" />
                  </Svg>
                </Overlay>
              </TableWrap>
            </PageSheet>
          </DocBody>
        </DocArea>

        <ScrollColumn>
          <ScrollTop>
            <Svg w={11} h={10}>
              <rect x="0" y="0" width="8" height="7" fill="#eee" />
              <rect x="4" y="3" width="7" height="7" fill="#77777e" stroke="#eee" />
            </Svg>
          </ScrollTop>
          <ScrollUp>
            <Caret $up $color="#fff" $size={5} />
          </ScrollUp>
          <ScrollThumb>
            <span />
            <span />
            <span />
          </ScrollThumb>
        </ScrollColumn>

        <Sidebar>
          <SideGrip>
            <span />
            <span />
          </SideGrip>
          {sideItems.map((item) => (
            <SideItem key={item.label} $active={item.active}>
              <SideIcon>{item.icon}</SideIcon>
              <SideLabel>{item.label}</SideLabel>
            </SideItem>
          ))}
        </Sidebar>

        <Panel>
          <PanelHeader>
            属性
            <Caret $color="#666" />
            <PanelTools>
              <Svg w={10} h={10}>
                <path d="M9.500.500L2 8M1 3v6h6" stroke="#888" fill="none" />
              </Svg>
              <Svg w={10} h={10}>
                <path d="M.5.500l9 9M9.500.500l-9 9" stroke="#999" fill="none" />
              </Svg>
            </PanelTools>
          </PanelHeader>
          <PanelTabs>
            <PanelTab $active>
              <Svg w={18} h={20}>
                <path d="M2.500 13L9 1l6.500 12M4.500 9.500h9" stroke={BLUE} strokeWidth="1.700" fill="none" />
                <rect x=".5" y="15.500" width="17" height="3" fill="#fff" stroke={BLUE} />
              </Svg>
              <PanelTabLabel>填充与轮廓</PanelTabLabel>
            </PanelTab>
            <PanelTab>
              <Svg w={18} h={20}>
                <path d="M2 14L9 1l7 13M4.500 9.500h9" stroke="#77808f" strokeWidth="1.800" fill="none" />
                <path d="M1 16h3M14 16h3" stroke="#b5b9c1" strokeWidth="1.500" />
              </Svg>
              <PanelTabLabel>效果</PanelTabLabel>
            </PanelTab>
          </PanelTabs>
          <PropList>
            <PropRow>
              <RightCaret />
              文本填充
              <Swatch />
            </PropRow>
            <PropRow>
              <RightCaret />
              文本轮廓
              <NoneButton>无</NoneButton>
            </PropRow>
          </PropList>
        </Panel>
        <EdgeStrip />
      </Main>
    </Shell>
  );
}
